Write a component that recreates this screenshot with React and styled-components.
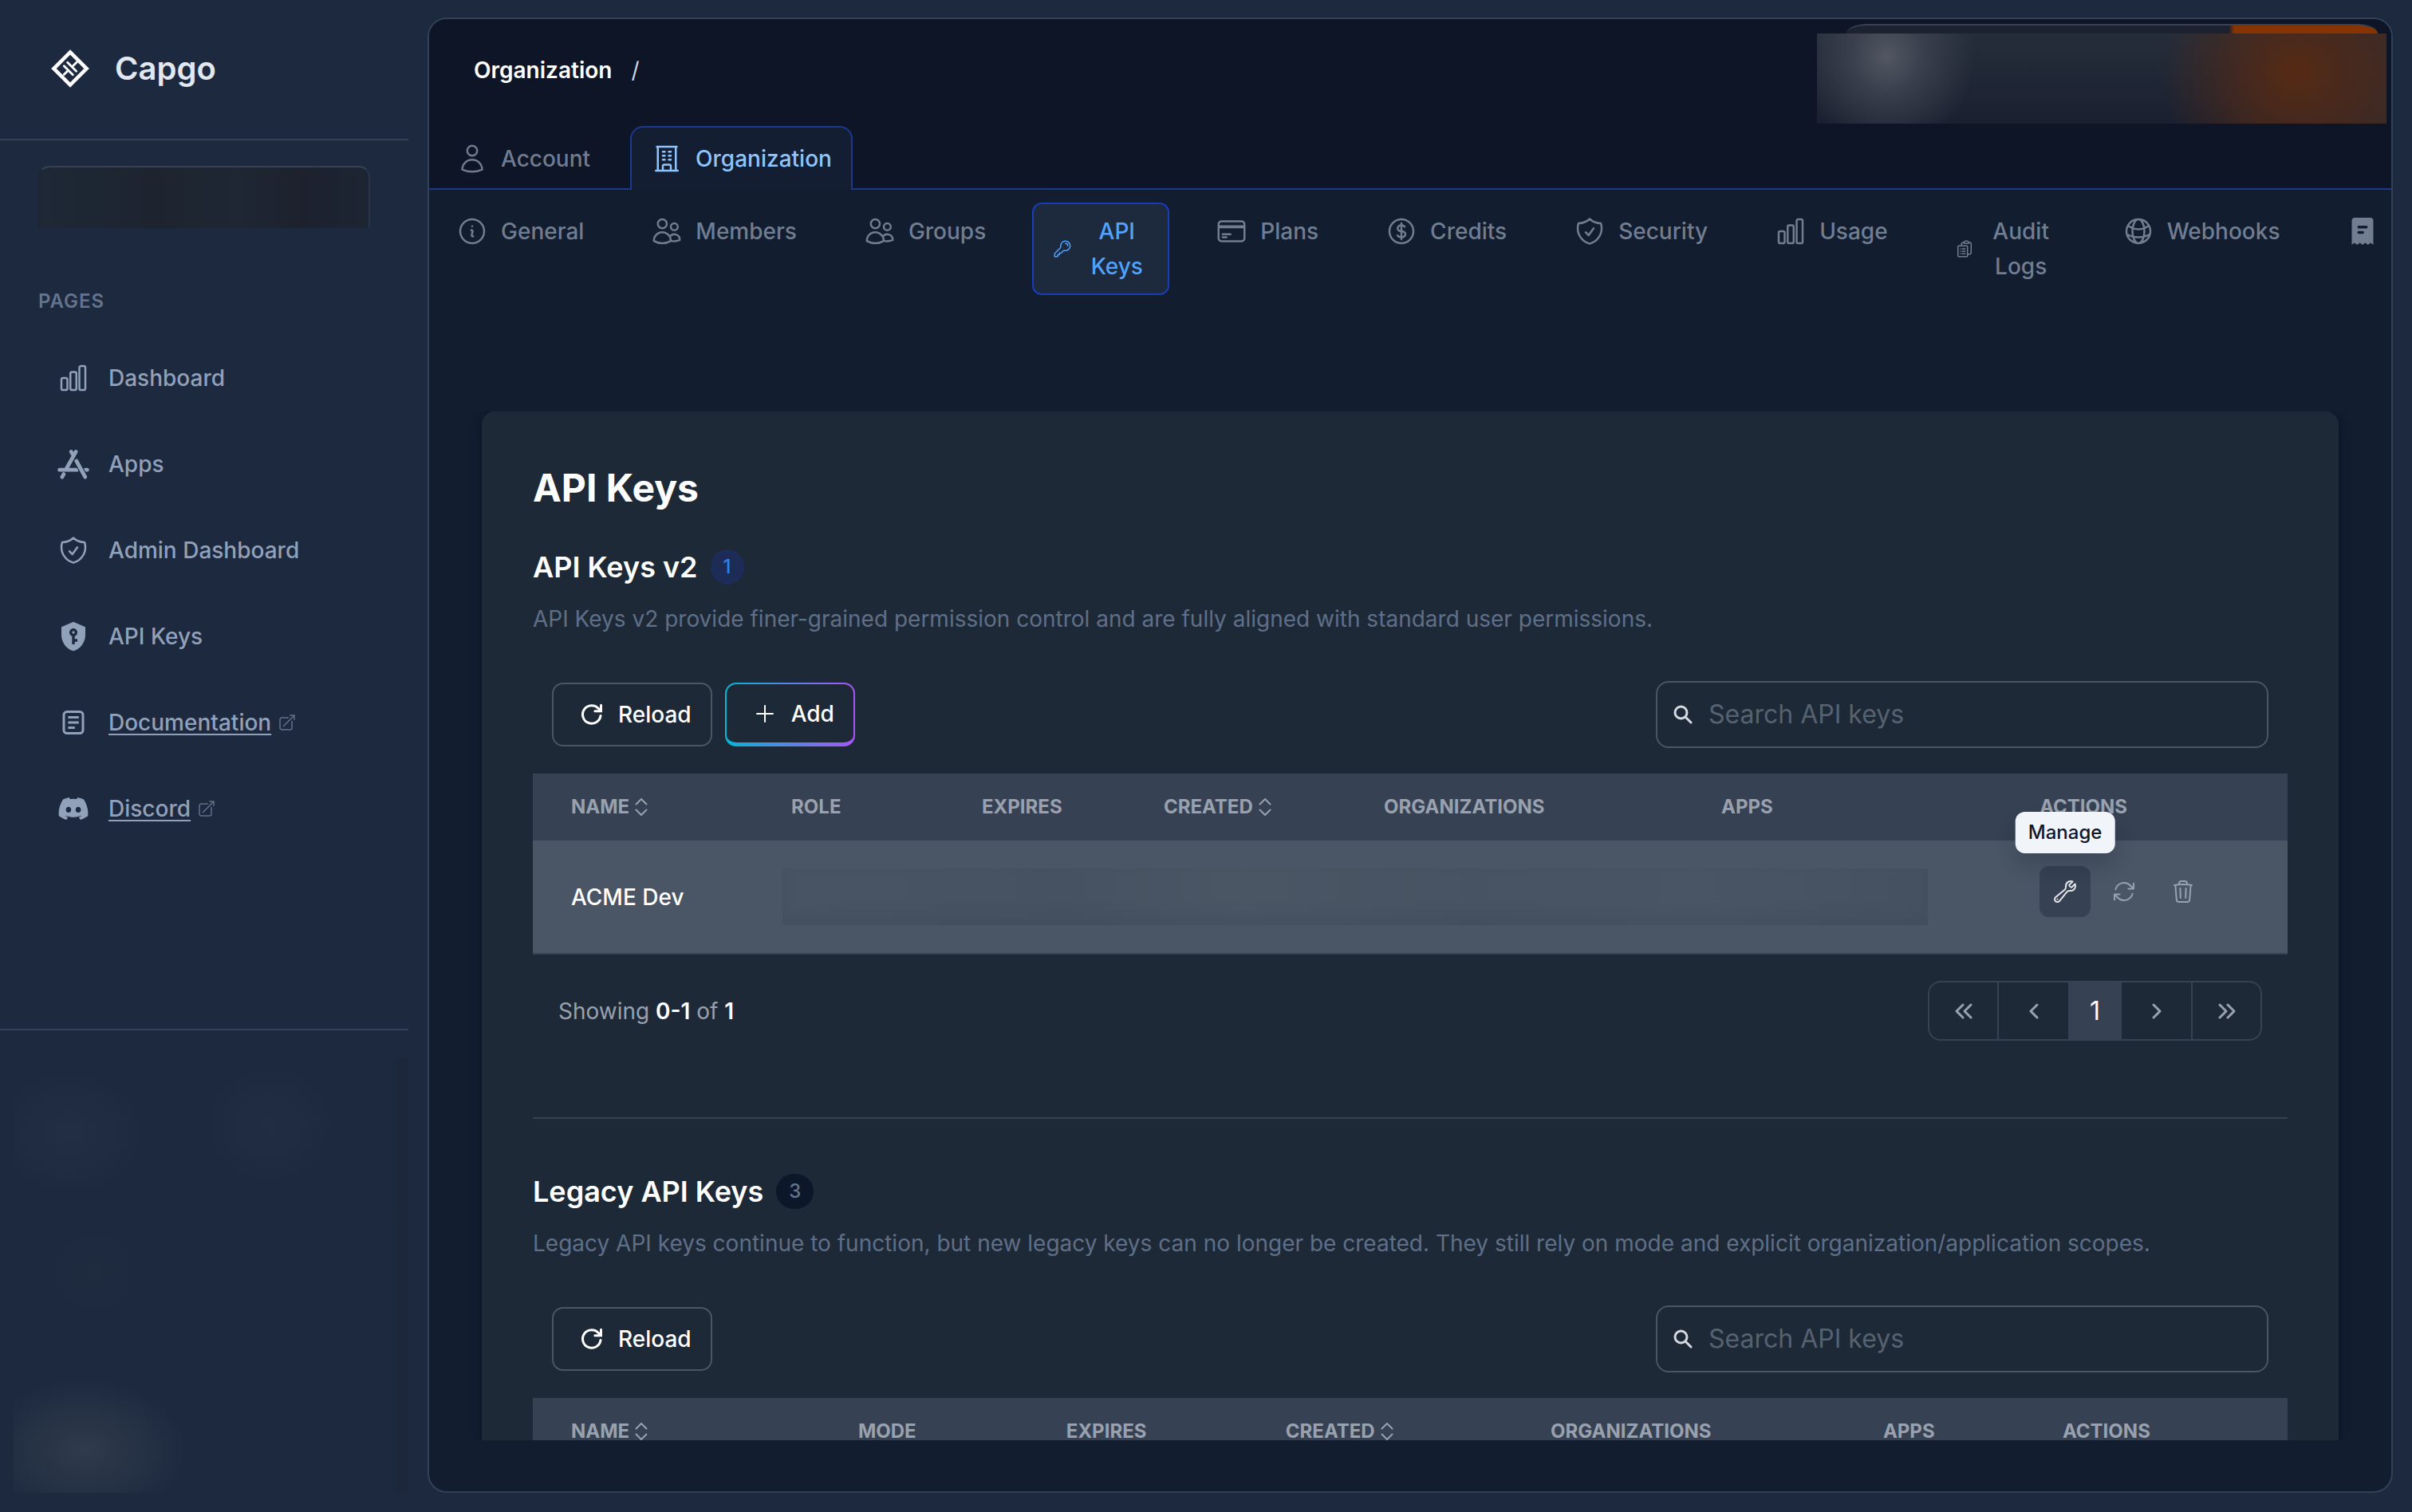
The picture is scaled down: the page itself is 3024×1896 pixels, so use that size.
import React from "react";
import styled, { createGlobalStyle, css } from "styled-components";
import {
  HiOutlineArrowPath,
  HiOutlineArrowTopRightOnSquare,
  HiOutlineBuildingOffice,
  HiOutlineChartBar,
  HiOutlineClipboardDocumentList,
  HiOutlineCreditCard,
  HiOutlineCurrencyDollar,
  HiOutlineGlobeAlt,
  HiOutlineInformationCircle,
  HiOutlineKey,
  HiOutlineShieldCheck,
  HiOutlineTrash,
  HiOutlineUser,
  HiOutlineUsers,
  HiOutlineWrench,
} from "react-icons/hi2";
import { FaDiscord } from "react-icons/fa";

const GlobalStyle = createGlobalStyle`
  * {
    box-sizing: border-box;
  }
  body {
    margin: 0;
    background: #1d293f;
    color: #fff;
    font-family: Inter, "Liberation Sans", sans-serif;
    font-size: 28px;
    line-height: 40px;
  }
  button, input {
    font: inherit;
    color: inherit;
  }
  h1, h2, p {
    margin: 0;
  }
`;

const Page = styled.div`
  display: flex;
  height: 100vh;
`;

/* sidebar */

const Sidebar = styled.aside`
  display: flex;
  flex-direction: column;
  flex: 0 0 512px;
`;

const Brand = styled.a`
  display: flex;
  align-items: center;
  gap: 32px;
  height: 176px;
  padding: 0 64px 2px;
  border-bottom: 2px solid #314158;
  color: #e2e8f0;
  font-size: 40px;
  font-weight: 600;
  text-decoration: none;
`;

const OrgPicker = styled.button`
  flex: none;
  height: 78px;
  margin: 32px 48px 0;
  border: 2px solid transparent;
  border-top-color: #364153;
  border-right-color: #28344a;
  border-radius: 14px 14px 0 0;
  background: linear-gradient(90deg, #1e2836, #1d2430 35%, #1e2733 60%, #1d212e 80%, #1c2533);
`;

const NavTitle = styled.h2`
  margin: 76px 48px 26px;
  color: #62748e;
  font-size: 24px;
  font-weight: 600;
  line-height: 32px;
  letter-spacing: 1px;
`;

const NavLink = styled.a`
  display: flex;
  align-items: center;
  height: 108px;
  padding-left: 72px;
  color: #90a1b9;
  font-weight: 500;
  text-decoration: none;

  > svg:first-child {
    width: 40px;
    height: 40px;
    margin-right: 24px;
  }
`;

const NavLabel = styled.span`
  ${(p) =>
    p.$external &&
    css`
      text-decoration: underline;
      text-decoration-thickness: 2px;
      text-underline-offset: 4px;
    `}
`;

const ExternalIcon = styled(HiOutlineArrowTopRightOnSquare)`
  width: 24px;
  height: 24px;
  margin-left: 8px;
  opacity: 0.6;
`;

const SidebarFooter = styled.div`
  margin-top: auto;
  height: 606px;
  padding: 34px 0 24px 17px;
  border-top: 2px solid #314158;
`;

const FooterBlur = styled.div`
  height: 100%;
  background:
    radial-gradient(ellipse 130px 90px at 88px 492px, #303c4c, #2c3849aa 45%, transparent),
    radial-gradient(ellipse 100px 80px at 70px 95px, #25324699, transparent),
    radial-gradient(ellipse 90px 80px at 320px 85px, #24304499, transparent),
    radial-gradient(ellipse 60px 60px at 100px 270px, #1f2e3f99, transparent),
    linear-gradient(90deg, transparent 96%, #1b273799 97%);
`;

/* main panel */

const Panel = styled.main`
  display: flex;
  flex-direction: column;
  flex: 1;
  min-width: 0;
  margin: 22px 24px 24px;
  border: 2px solid #314158;
  border-radius: 24px;
  background: #121d30;
  overflow: hidden;
`;

const TopBar = styled.header`
  flex: none;
  background: #0d1527;
`;

const TitleRow = styled.div`
  display: flex;
  justify-content: space-between;
  height: 134px;
`;

const Breadcrumb = styled.nav`
  display: flex;
  align-items: center;
  gap: 24px;
  height: 128px;
  padding-left: 56px;
  color: #cad5e2;

  a {
    color: #fff;
    font-weight: 600;
    text-decoration: none;
  }
`;

const Banner = styled.div`
  width: 714px;
  margin: 6px 6px 0 0;
`;

const BannerEdge = styled.div`
  height: 12px;
  margin: 0 11px 0 37px;
  border-top: 2px solid #364153;
  border-radius: 30px 30px 0 0 / 14px 14px 0 0;
  background: linear-gradient(90deg, #1d2230 72%, #873400 73%, #873400);
`;

const BannerBlur = styled.div`
  height: 113px;
  background:
    radial-gradient(ellipse 110px 120px at 88px 28px, #525762, #444a56b0 40%, #2c344200),
    radial-gradient(ellipse 170px 160px at 600px 50px, #562a14, #51291799 50%, #3a282000),
    linear-gradient(90deg, #202c3e00 70%, #352a2b),
    linear-gradient(#252d3a, #1a2030);
`;

const TabRow = styled.div`
  display: flex;
  gap: 24px;
  padding-left: 8px;
  box-shadow: inset 0 -2px #1c398e;
`;

const Tab = styled.button`
  display: flex;
  align-items: center;
  gap: 16px;
  height: 80px;
  padding: 0 24px;
  border: 2px solid ${(p) => (p.$active ? "#1c398e" : "transparent")};
  border-bottom: 0;
  border-radius: 16px 16px 0 0;
  background: ${(p) => (p.$active ? "#141e32" : "transparent")};
  color: ${(p) => (p.$active ? "#8ec5ff" : "#6f7b8f")};
  font-weight: 500;

  svg {
    width: 40px;
    height: 40px;
  }
`;

const SubTabRow = styled.div`
  display: flex;
  align-items: flex-start;
  gap: 32px;
  flex: none;
  padding: 16px 0 0 8px;
  overflow: hidden;
`;

const SubTab = styled.button`
  display: flex;
  align-items: center;
  gap: 16px;
  flex: none;
  min-height: 72px;
  padding: 12px 24px;
  border: 2px solid ${(p) => (p.$active ? "#193cb8" : "transparent")};
  border-radius: 12px;
  background: ${(p) => (p.$active ? "#1d293d" : "transparent")};
  color: ${(p) => (p.$active ? "#51a2ff" : "#717d91")};
  font-weight: 500;
  line-height: 44px;

  svg {
    width: ${(p) => (p.$wrap ? 24 : 40)}px;
    height: ${(p) => (p.$wrap ? 24 : 40)}px;
  }

  span {
    width: ${(p) => (p.$wrap ? `${p.$wrap}px` : "auto")};
  }
`;

const Scroll = styled.div`
  flex: 1;
  min-height: 0;
  margin: 146px 0 64px;
  padding: 0 66px;
  overflow: hidden;
`;

const Card = styled.section`
  min-height: 100%;
  padding: 64px;
  border-radius: 16px;
  background: #1e2937;
  box-shadow: 0 4px 12px #0a1224;
`;

const CardTitle = styled.h1`
  margin-bottom: 45px;
  font-size: 48px;
  font-weight: 700;
  line-height: 64px;
`;

const KeySection = styled.section`
  & + & {
    margin-top: 96px;
    padding-top: 69px;
    border-top: 2px solid #364153;
  }
`;

const SectionHead = styled.div`
  display: flex;
  align-items: center;
  gap: 16px;
  margin-bottom: 24px;

  h2 {
    font-size: 36px;
    font-weight: 600;
    line-height: 44px;
  }
`;

const CountBadge = styled.span`
  padding: 6px 16px;
  border-radius: 22px;
  background: ${(p) => (p.$muted ? "#0d172a" : "#1c2c57")};
  color: ${(p) => (p.$muted ? "#62748e" : "#2b7fff")};
  font-size: 24px;
  font-weight: 500;
  line-height: 32px;
`;

const Description = styled.p`
  color: #5f6f88;
  line-height: 38px;
`;

const Toolbar = styled.div`
  display: flex;
  align-items: center;
  gap: 16px;
  padding: 59px 24px 32px;
`;

const ToolButton = styled.button`
  display: flex;
  align-items: center;
  gap: 15px;
  height: 80px;
  padding: 0 24px 0 30px;
  border: 2px solid #4a5565;
  border-radius: 14px;
  background: #1e2937;
  font-weight: 500;

  svg {
    width: 36px;
    height: 36px;
  }
`;

const AddButton = styled(ToolButton)`
  border-width: 2px 2px 5px;
  border-color: transparent;
  background:
    linear-gradient(#1e2937, #1e2937) padding-box,
    linear-gradient(90deg, #06b6d4, #a855f7) border-box;
`;

const SearchBox = styled.label`
  display: flex;
  align-items: center;
  gap: 20px;
  width: 768px;
  height: 84px;
  margin-left: auto;
  padding: 0 20px;
  border: 2px solid #4a5565;
  border-radius: 16px;
  color: #d5dae1;

  svg {
    flex: none;
    width: 24px;
    height: 24px;
  }

  input {
    flex: 1;
    min-width: 0;
    padding: 0;
    border: 0;
    outline: none;
    background: none;
    font-size: 32px;
  }

  input::placeholder {
    color: #566270;
    opacity: 1;
  }
`;

const Table = styled.table`
  width: 100%;
  table-layout: fixed;
  border-collapse: collapse;
  text-align: left;
`;

const HeadCell = styled.th`
  width: ${(p) => p.$width}%;
  height: 84px;
  padding: 0 0 0 48px;
  background: #364153;
  color: #99a1af;
  font-size: 24px;
  font-weight: 700;
  line-height: 32px;
  white-space: nowrap;

  svg {
    width: 18px;
    height: 24px;
    margin-left: 6px;
    vertical-align: -4px;
  }
`;

const Row = styled.tr`
  height: 142px;
  border-bottom: 2px solid #364153;
  background: #4a5565;
`;

const NameCell = styled.td`
  padding: 0 0 0 48px;
  font-weight: 500;
`;

const BlurCell = styled.td`
  padding: 0 92px 0 37px;
`;

const CellBlur = styled.div`
  height: 71px;
  background: linear-gradient(90deg, #485463, #465161 25%, #4b5665 40%, #475262 60%, #495564 80%, #455060);
  box-shadow: inset 0 -12px 14px #414c5b88;
`;

const ActionCell = styled.td`
  padding: 32px 0 0 48px;
  vertical-align: top;
`;

const Actions = styled.div`
  display: flex;
  gap: 10px;
`;

const IconButton = styled.button`
  position: relative;
  display: flex;
  align-items: center;
  justify-content: center;
  width: 64px;
  height: 64px;
  padding: 0;
  border: 0;
  border-radius: 12px;
  background: ${(p) => (p.$active ? "#364153" : "transparent")};
  color: ${(p) => (p.$active ? "#e5e7eb" : "#99a1af")};

  svg {
    width: 32px;
    height: 32px;
  }
`;

const Tooltip = styled.span`
  position: absolute;
  bottom: calc(100% + 16px);
  left: 50%;
  padding: 10px 16px;
  border-radius: 12px;
  background: #f1f5f9;
  box-shadow: 0 16px 24px #0f172b33;
  color: #0f172b;
  font-size: 24px;
  font-weight: 500;
  line-height: 32px;
  transform: translateX(-50%);
`;

const TableFooter = styled.div`
  display: flex;
  align-items: center;
  justify-content: space-between;
  padding: 33px 32px 0;
  color: #99a1af;

  b {
    color: #fff;
    font-weight: 600;
  }
`;

const Pager = styled.div`
  display: flex;
  border: 2px solid #364153;
  border-radius: 16px;
  overflow: hidden;
`;

const PageButton = styled.button`
  display: flex;
  align-items: center;
  justify-content: center;
  width: ${(p) => (p.$current ? 67 : 87)}px;
  height: 71px;
  padding: 0;
  border: 0;
  background: ${(p) => (p.$current ? "#364153" : "transparent")};
  color: ${(p) => (p.$current ? "#fff" : "#99a1af")};
  font-size: 32px;

  ${(p) =>
    p.$divider &&
    css`
      border-${p.$divider}: 2px solid #364153;
    `}
`;

/* icons that the packs do not have */

const Logo = () => (
  <svg width="48" height="48" viewBox="0 0 48 48" fill="none" stroke="#fff" aria-hidden="true">
    <path d="M24 3.400 44.600 24 24 44.600 3.400 24Z" strokeWidth="4.600" />
    <path
      d="m16.300 20.800 11 11M20.600 16.200l11 11M21.600 26.200l-5.400 5.400M26.400 21.800l5.800-5.800"
      strokeWidth="2.800"
      strokeLinecap="round"
    />
  </svg>
);

const AppStoreIcon = () => (
  <svg viewBox="0 0 40 40" fill="none" stroke="currentColor" strokeWidth="4.800" strokeLinecap="round">
    <path d="M17.200 4.400 20 9M23.200 4.400 10.800 26.500M2.600 27.200h22M35 27.200h2.400M7.900 32.600 5.800 36.200" />
    <path d="M23.600 15.500 34.600 36" stroke="#1d293f" strokeWidth="7" strokeLinecap="butt" />
    <path d="m23.800 16 11 20.200" />
  </svg>
);

const ShieldKeyIcon = () => (
  <svg viewBox="0 0 24 24" fill="currentColor">
    <path d="M12 8a1 1 0 0 1 1 1 1 1 0 0 1-1 1 1 1 0 0 1-1-1 1 1 0 0 1 1-1m9 3c0 5.550-3.840 10.740-9 12-5.160-1.260-9-6.450-9-12V5l9-4 9 4zm-9-5a3 3 0 0 0-3 3c0 1.310.83 2.420 2 2.830V18h2v-2h2v-2h-2v-2.170c1.170-.41 2-1.520 2-2.830a3 3 0 0 0-3-3" />
  </svg>
);

const DocIcon = () => (
  <svg viewBox="0 0 40 40" fill="none" stroke="currentColor" strokeWidth="3">
    <rect x="8" y="6.500" width="24" height="27" rx="4" />
    <path d="M13.400 13.400h13.400M13.400 20h13.400M13.400 26.400h8.400" />
  </svg>
);

const BillIcon = () => (
  <svg viewBox="0 0 40 40" fill="currentColor">
    <path
      fillRule="evenodd"
      d="M10.500 3h19a4 4 0 0 1 4 4v30l-3.400-2.600-3.300 2.600-3.400-2.600L20 37l-3.400-2.600-3.400 2.600-3.400-2.600L6.500 37V7a4 4 0 0 1 4-4Zm4.700 10a1.600 1.600 0 0 0 0 3.400h9.600a1.600 1.600 0 0 0 0-3.400Zm0 6.800a1.600 1.600 0 0 0 0 3.400h5a1.600 1.600 0 0 0 0-3.400Z"
    />
  </svg>
);

const ReloadIcon = () => (
  <svg viewBox="0 0 36 36" fill="none" stroke="currentColor" strokeWidth="3" strokeLinecap="round">
    <path d="M29 19.500A11.300 11.300 0 1 1 26.400 10.600L29 13.300M29.500 6.200v7.600h-7.600" />
  </svg>
);

const PlusIcon = () => (
  <svg viewBox="0 0 36 36" stroke="currentColor" strokeWidth="2" strokeLinecap="round">
    <path d="M18 8v20M8 18h20" />
  </svg>
);

const SearchIcon = () => (
  <svg viewBox="0 0 24 24" fill="none" stroke="currentColor" strokeWidth="3" strokeLinecap="round">
    <circle cx="9.500" cy="9.500" r="7.500" />
    <path d="m15 15 7 7" />
  </svg>
);

const SortIcon = () => (
  <svg viewBox="0 0 18 24" fill="none" stroke="currentColor" strokeWidth="2" strokeLinecap="round" strokeLinejoin="round">
    <path d="m2.500 8.500 6.500-6.500 6.500 6.500M2.500 15.500 9 22l6.500-6.500" />
  </svg>
);

const Chevrons = ({ d, width }) => (
  <svg
    width={width}
    height="20"
    viewBox={`0 0 ${width} 20`}
    fill="none"
    stroke="currentColor"
    strokeWidth="3"
    strokeLinecap="round"
    strokeLinejoin="round"
  >
    <path d={d} />
  </svg>
);

const navItems = [
  { label: "Dashboard", Icon: HiOutlineChartBar },
  { label: "Apps", Icon: AppStoreIcon },
  { label: "Admin Dashboard", Icon: HiOutlineShieldCheck },
  { label: "API Keys", Icon: ShieldKeyIcon },
  { label: "Documentation", Icon: DocIcon, external: true },
  { label: "Discord", Icon: FaDiscord, external: true },
];

const subTabs = [
  { label: "General", Icon: HiOutlineInformationCircle },
  { label: "Members", Icon: HiOutlineUsers },
  { label: "Groups", Icon: HiOutlineUsers },
  { label: "API Keys", Icon: HiOutlineKey, active: true, wrap: 80 },
  { label: "Plans", Icon: HiOutlineCreditCard },
  { label: "Credits", Icon: HiOutlineCurrencyDollar },
  { label: "Security", Icon: HiOutlineShieldCheck },
  { label: "Usage", Icon: HiOutlineChartBar },
  { label: "Audit Logs", Icon: HiOutlineClipboardDocumentList, wrap: 86 },
  { label: "Webhooks", Icon: HiOutlineGlobeAlt },
];

// widths are percentages of the table
const keyColumns = [
  { label: "NAME", width: 12.55, sortable: true },
  { label: "ROLE", width: 10.86 },
  { label: "EXPIRES", width: 10.36 },
  { label: "CREATED", width: 12.55, sortable: true },
  { label: "ORGANIZATIONS", width: 19.23 },
  { label: "APPS", width: 18.14 },
  { label: "ACTIONS", width: 16.31 },
];

const legacyColumns = [
  { label: "NAME", width: 16.36, sortable: true },
  { label: "MODE", width: 11.86 },
  { label: "EXPIRES", width: 12.5 },
  { label: "CREATED", width: 15.1, sortable: true },
  { label: "ORGANIZATIONS", width: 18.95 },
  { label: "APPS", width: 10.23 },
  { label: "ACTIONS", width: 15 },
];

function TableHead({ columns }) {
  return (
    <thead>
      <tr>
        {columns.map((c) => (
          <HeadCell key={c.label} $width={c.width}>
            {c.label}
            {c.sortable && <SortIcon />}
          </HeadCell>
        ))}
      </tr>
    </thead>
  );
}

function KeyToolbar({ canAdd }) {
  return (
    <Toolbar>
      <ToolButton type="button">
        <ReloadIcon />
        Reload
      </ToolButton>
      {canAdd && (
        <AddButton type="button">
          <PlusIcon />
          Add
        </AddButton>
      )}
      <SearchBox>
        <SearchIcon />
        <input type="text" placeholder="Search API keys" aria-label="Search API keys" />
      </SearchBox>
    </Toolbar>
  );
}

function App() {
  return (
    <Page>
      <GlobalStyle />
      <Sidebar>
        <Brand href="#">
          <Logo />
          Capgo
        </Brand>
        <OrgPicker type="button" aria-label="Select organization" />
        <NavTitle>PAGES</NavTitle>
        <nav>
          {navItems.map(({ label, Icon, external }) => (
            <NavLink key={label} href="#">
              <Icon />
              <NavLabel $external={external}>{label}</NavLabel>
              {external && <ExternalIcon />}
            </NavLink>
          ))}
        </nav>
        <SidebarFooter>
          <FooterBlur />
        </SidebarFooter>
      </Sidebar>

      <Panel>
        <TopBar>
          <TitleRow>
            <Breadcrumb>
              <a href="#">Organization</a>
              <span>/</span>
            </Breadcrumb>
            <Banner>
              <BannerEdge />
              <BannerBlur />
            </Banner>
          </TitleRow>
          <TabRow>
            <Tab type="button">
              <HiOutlineUser />
              Account
            </Tab>
            <Tab type="button" $active>
              <HiOutlineBuildingOffice />
              Organization
            </Tab>
          </TabRow>
        </TopBar>

        <SubTabRow>
          {subTabs.map(({ label, Icon, active, wrap }) => (
            <SubTab key={label} type="button" $active={active} $wrap={wrap}>
              <Icon />
              <span>{label}</span>
            </SubTab>
          ))}
          <SubTab type="button" aria-label="Billing">
            <BillIcon />
          </SubTab>
        </SubTabRow>

        <Scroll>
          <Card>
            <CardTitle>API Keys</CardTitle>

            <KeySection>
              <SectionHead>
                <h2>API Keys v2</h2>
                <CountBadge>1</CountBadge>
              </SectionHead>
              <Description>
                API Keys v2 provide finer-grained permission control and are fully aligned with standard user
                permissions.
              </Description>
              <KeyToolbar canAdd />
              <Table>
                <TableHead columns={keyColumns} />
                <tbody>
                  <Row>
                    <NameCell>ACME Dev</NameCell>
                    <BlurCell colSpan={5}>
                      <CellBlur />
                    </BlurCell>
                    <ActionCell>
                      <Actions>
                        <IconButton type="button" $active>
                          <HiOutlineWrench />
                          <Tooltip>Manage</Tooltip>
                        </IconButton>
                        <IconButton type="button" aria-label="Regenerate">
                          <HiOutlineArrowPath />
                        </IconButton>
                        <IconButton type="button" aria-label="Delete">
                          <HiOutlineTrash />
                        </IconButton>
                      </Actions>
                    </ActionCell>
                  </Row>
                </tbody>
              </Table>
              <TableFooter>
                <span>
                  Showing <b>0-1</b> of <b>1</b>
                </span>
                <Pager>
                  <PageButton type="button" aria-label="First page" $divider="right">
                    <Chevrons width={24} d="M11 2 3 10l8 8M21 2l-8 8 8 8" />
                  </PageButton>
                  <PageButton type="button" aria-label="Previous page">
                    <Chevrons width={14} d="M11 2 3 10l8 8" />
                  </PageButton>
                  <PageButton type="button" $current>
                    1
                  </PageButton>
                  <PageButton type="button" aria-label="Next page">
                    <Chevrons width={14} d="m3 2 8 8-8 8" />
                  </PageButton>
                  <PageButton type="button" aria-label="Last page" $divider="left">
                    <Chevrons width={24} d="m3 2 8 8-8 8M13 2l8 8-8 8" />
                  </PageButton>
                </Pager>
              </TableFooter>
            </KeySection>

            <KeySection>
              <SectionHead>
                <h2>Legacy API Keys</h2>
                <CountBadge $muted>3</CountBadge>
              </SectionHead>
              <Description>
                Legacy API keys continue to function, but new legacy keys can no longer be created. They still rely
                on mode and explicit organization/application scopes.
              </Description>
              <KeyToolbar />
              <Table>
                <TableHead columns={legacyColumns} />
              </Table>
            </KeySection>
          </Card>
        </Scroll>
      </Panel>
    </Page>
  );
}

export default App;
